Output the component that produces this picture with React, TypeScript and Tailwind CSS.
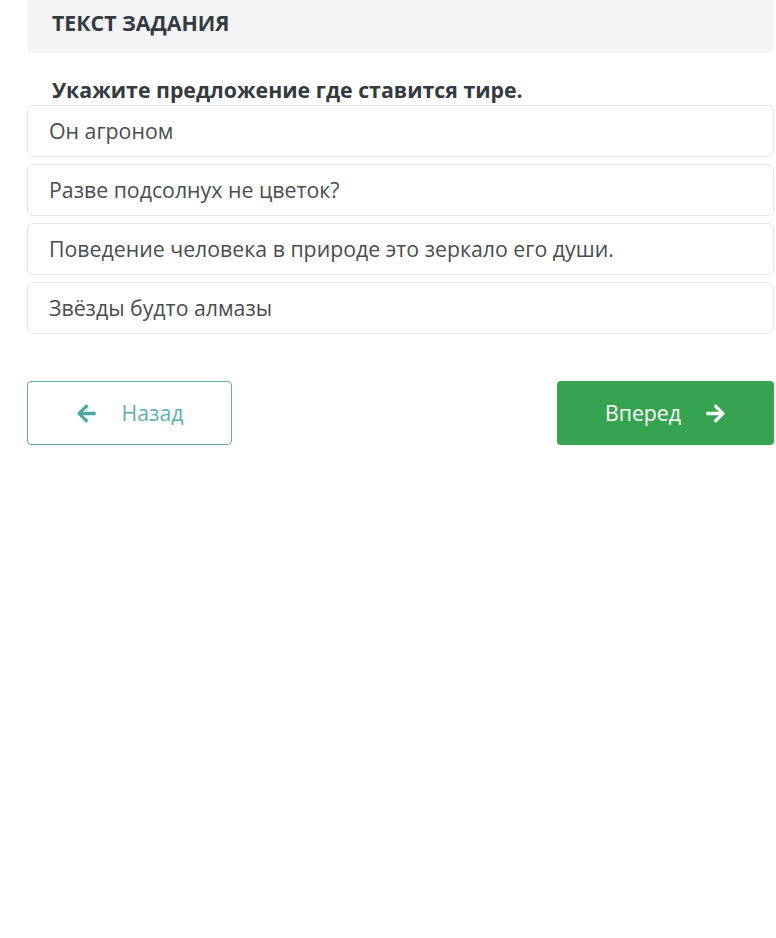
import React from "react";
import { FaArrowLeft, FaArrowRight } from "react-icons/fa";

const options: string[] = [
  "Он агроном",
  "Разве подсолнух не цветок?",
  "Поведение человека в природе это зеркало его души.",
  "Звёзды будто алмазы",
];

export default function App() {
  return (
    <div className="w-[776px] min-h-[938px] bg-white font-['Open_Sans',sans-serif] overflow-hidden">
      <div className="pl-[27px] pr-[2px]">
        {/* Task header */}
        <div className="-mt-[10px] h-[63px] bg-[#f2f4f5] rounded-md flex items-center px-[25px]">
          <span className="text-[21.3px] font-bold text-[#343a40] pt-[2px]">ТЕКСТ ЗАДАНИЯ</span>
        </div>

        {/* Question */}
        <p className="mt-[23px] px-[25px] text-[21.3px] font-bold text-[#343a40] leading-[28px]">
          Укажите предложение где ставится тире.
        </p>

        {/* Answer options */}
        <div className="mt-[1px] flex flex-col gap-[7px]">
          {options.map((text) => (
            <div
              key={text}
              className="h-[52px] border border-[#e3e6e8] rounded-md flex items-center px-[21px] text-[21.3px] text-[#4a4d50]"
            >
              {text}
            </div>
          ))}
        </div>

        {/* Navigation */}
        <div className="mt-[47px] flex justify-between">
          <button className="w-[205px] h-[64px] border border-[#5fb0aa] rounded-[4px] flex items-center justify-center gap-[25px] text-[21.3px] text-[#5fb0aa]">
            <FaArrowLeft className="size-[21px] text-[#4aa8a0]" />
            <span>Назад</span>
          </button>
          <button className="w-[217px] h-[64px] bg-[#36a351] rounded-[4px] flex items-center justify-center gap-[24px] text-[21.3px] text-white">
            <span>Вперед</span>
            <FaArrowRight className="size-[21px]" />
          </button>
        </div>
      </div>
    </div>
  );
}
